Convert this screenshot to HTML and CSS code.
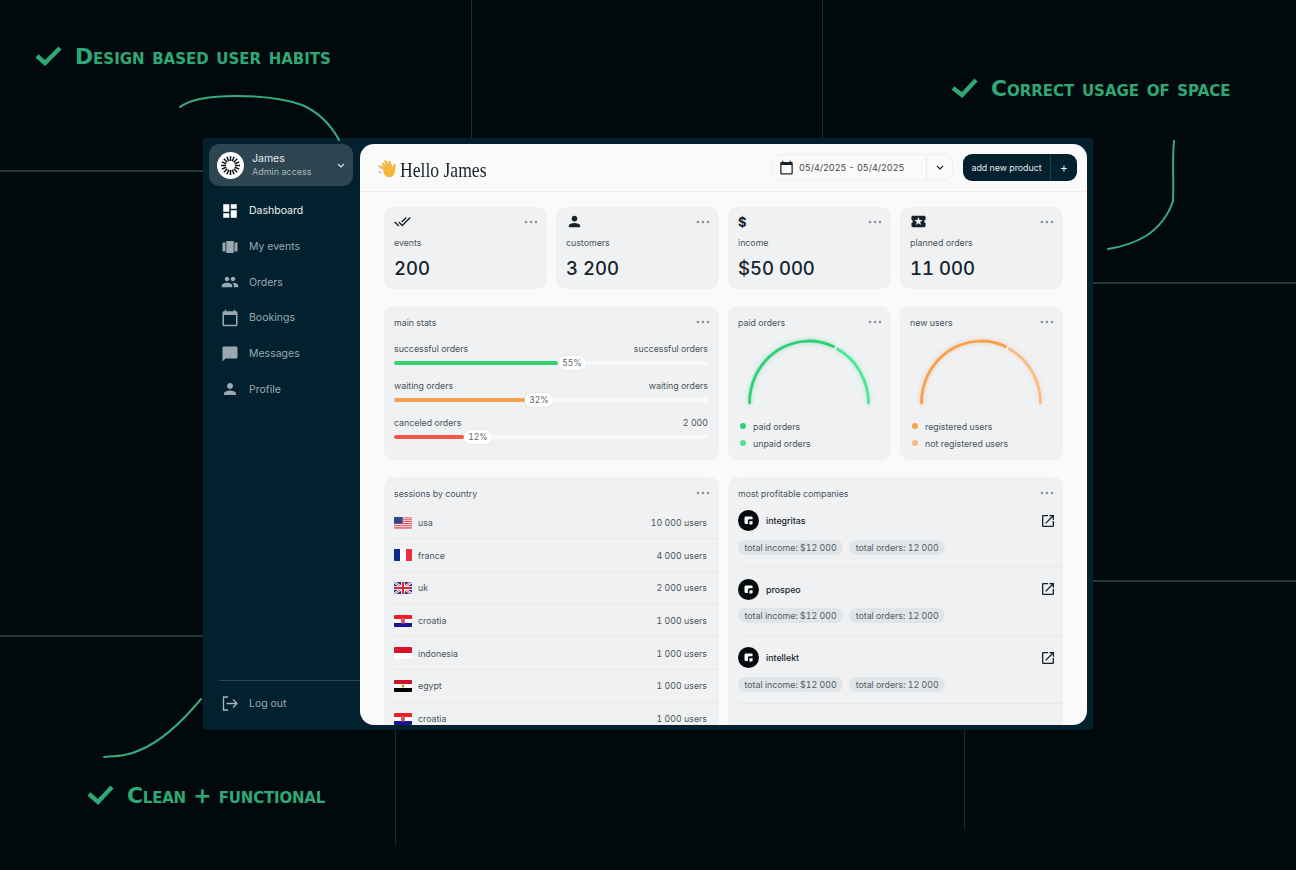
FILE: index.html
```html
<!DOCTYPE html>
<html lang="en">
<head>
    <meta charset="UTF-8">
    <meta name="viewport" content="width=device-width, initial-scale=1.0">
    <title>Dashboard</title>
    <link rel="stylesheet" href="styles.css">
</head>
<body>

    <svg class="defs" width="0" height="0">
        <symbol id="i-dots" viewBox="0 0 14 4"><circle cx="2" cy="2" r="1.3"/><circle cx="7" cy="2" r="1.3"/><circle cx="12" cy="2" r="1.3"/></symbol>
        <symbol id="i-open" viewBox="0 0 24 24"><path d="M19 19H5V5h7V3H5c-1.11 0-2 .9-2 2v14c0 1.1.89 2 2 2h14c1.1 0 2-.9 2-2v-7h-2v7zM14 3v2h3.59l-9.83 9.83 1.41 1.41L19 6.41V10h2V3h-7z"/></symbol>
        <symbol id="i-logo" viewBox="0 0 21 21"><circle cx="10.5" cy="10.5" r="10.5" fill="#05090c"/><path d="M6.5 8c0-.9.6-1.5 1.5-1.5h5.2c.9 0 1.4.5 1.4 1.3v1.4h-3.2c-.9 0-1.5.6-1.5 1.5v3.2H8c-.9 0-1.5-.6-1.5-1.5zM11.4 11.2h3.2v2.2c0 .7-.5 1.2-1.2 1.2h-2v-3.4z" fill="#fff"/></symbol>
        <symbol id="i-cal" viewBox="0 0 24 24"><path d="M20 3h-1V1h-2v2H7V1H5v2H4c-1.1 0-2 .9-2 2v16c0 1.1.9 2 2 2h16c1.1 0 2-.9 2-2V5c0-1.1-.9-2-2-2zm0 18H4V8h16v13z"/></symbol>
    </svg>

    <!-- background grid -->
    <div class="gline h" style="top:170px;left:0;width:203px"></div>
    <div class="gline h" style="top:635px;left:0;width:203px"></div>
    <div class="gline h" style="top:282px;left:1093px;width:203px"></div>
    <div class="gline h" style="top:580px;left:1093px;width:203px"></div>
    <div class="gline v" style="left:471px;top:0;height:138px"></div>
    <div class="gline v" style="left:822px;top:0;height:138px"></div>
    <div class="gline v" style="left:395px;top:730px;height:115px"></div>
    <div class="gline v" style="left:964px;top:730px;height:100px"></div>

    <!-- notes -->
    <svg class="scribbles" width="1296" height="870" viewBox="0 0 1296 870">
        <g class="scribble">
            <path d="M180 107C192 98 215 96 236 96C262 96 286 99 302 105C318 112 331 125 339 140"/>
            <path d="M1174 141C1172 160 1174 180 1173 201C1168 216 1158 228 1146 236C1134 243 1122 247 1108 249"/>
            <path d="M104 757C116 756 128 756 140 750C162 741 182 722 201 699"/>
        </g>
        <g class="tick">
            <path d="M37 56L45 63L60 48"/>
            <path d="M953 88L962 95L976 80"/>
            <path d="M89 794L98 802L112 787"/>
        </g>
    </svg>
    <div class="note note-a">Design based user habits</div>
    <div class="note note-b">Correct usage of space</div>
    <div class="note note-c">Clean + functional</div>

    <div class="app">
        <aside class="sidebar">
            <div class="user">
                <svg class="avatar" width="27" height="27" viewBox="0 0 27 27">
                    <circle cx="13.5" cy="13.5" r="13.5" fill="#fff"/>
                    <g class="rays">
                        <path d="M13.5 4v5M13.5 18v5M4 13.5h5M18 13.5h5M6.8 6.8l3.5 3.5M16.7 16.7l3.5 3.5M6.8 20.2l3.5-3.5M16.7 10.3l3.5-3.5M9.9 4.8l1.9 4.5M15.2 17.7l1.9 4.5M4.8 17.1l4.5-1.9M17.7 11.8l4.5-1.9M4.8 9.9l4.5 1.9M17.7 15.2l4.5 1.9M17.1 4.8l-1.9 4.5M11.8 17.7l-1.9 4.5"/>
                    </g>
                </svg>
                <div class="user-text">
                    <div class="user-name">James</div>
                    <div class="user-role">Admin access</div>
                </div>
                <svg class="chev" width="8" height="5" viewBox="0 0 8 5"><path d="M1 1l3 3 3-3"/></svg>
            </div>

            <nav class="nav">
                <a class="nav-item active">
                    <svg viewBox="0 0 24 24"><path d="M3 13h8V3H3v10zm0 8h8v-6H3v6zm10 0h8V11h-8v10zm0-18v6h8V3h-8z"/></svg>
                    Dashboard
                </a>
                <a class="nav-item">
                    <svg viewBox="0 0 24 24"><path d="M7 20h10V4H7v16zm-5-2h4V6H2v12zM18 6v12h4V6h-4z"/></svg>
                    My events
                </a>
                <a class="nav-item">
                    <svg viewBox="0 0 24 24"><path d="M16 11c1.66 0 2.99-1.34 2.99-3S17.66 5 16 5c-1.66 0-3 1.34-3 3s1.34 3 3 3zm-8 0c1.66 0 2.99-1.34 2.99-3S9.66 5 8 5C6.34 5 5 6.34 5 8s1.34 3 3 3zm0 2c-2.33 0-7 1.17-7 3.5V19h14v-2.5c0-2.33-4.67-3.5-7-3.5zm8 0c-.29 0-.62.02-.97.05 1.16.84 1.97 1.97 1.97 3.45V19h6v-2.5c0-2.33-4.67-3.5-7-3.5z"/></svg>
                    Orders
                </a>
                <a class="nav-item">
                    <svg viewBox="0 0 24 24"><use href="#i-cal"/></svg>
                    Bookings
                </a>
                <a class="nav-item">
                    <svg viewBox="0 0 24 24"><path d="M20 2H4c-1.1 0-2 .9-2 2v18l4-4h14c1.1 0 2-.9 2-2V4c0-1.1-.9-2-2-2z"/></svg>
                    Messages
                </a>
                <a class="nav-item">
                    <svg viewBox="0 0 24 24"><path d="M12 12c2.21 0 4-1.79 4-4s-1.79-4-4-4-4 1.79-4 4 1.79 4 4 4zm0 2c-2.67 0-8 1.34-8 4v2h16v-2c0-2.66-5.33-4-8-4z"/></svg>
                    Profile
                </a>
            </nav>

            <div class="logout">
                <svg class="logout-icon" width="16" height="15" viewBox="0 0 16 15"><path d="M6 1H1.5v13H6M4.5 7.5H15M11 3.5l4 4-4 4"/></svg>
                Log out
            </div>
        </aside>

        <main class="main">
            <header class="topbar">
                <div class="hello">
                    <svg class="wave" width="21" height="20" viewBox="0 0 21 20">
                        <path d="M3 10L1 8M3 15L1.2 14" stroke="#b7b7b7" stroke-width="1.4" fill="none" stroke-linecap="round"/>
                        <path transform="rotate(-18 10 10)" d="M5 10.5L3.2 7.4c-.8-1.3 1-2.4 1.9-1.2L6.6 8.6 5.4 4.8c-.4-1.5 1.6-2.1 2.2-.7l1.6 4-.8-5c-.2-1.5 1.9-1.8 2.3-.3l1.2 5 .1-3.3c.1-1.5 2.1-1.4 2.2.1l.6 6.2 1.7-2.3c.9-1.1 2.4 0 1.7 1.2l-2.3 4.8c-1.2 3.2-3.8 5.4-7 4.7-2.6-.6-3.8-2.9-4.8-5.2z" fill="#f5b43a"/>
                    </svg>
                    <h1>Hello James</h1>
                </div>
                <div class="top-actions">
                    <div class="datebox">
                        <div class="date-range">
                            <svg width="15" height="15" viewBox="0 0 24 24"><use href="#i-cal"/></svg>
                            05/4/2025 - 05/4/2025
                        </div>
                        <div class="date-drop">
                            <svg class="chev" width="8" height="5" viewBox="0 0 8 5"><path d="M1 1l3 3 3-3"/></svg>
                        </div>
                    </div>
                    <div class="add-btn">
                        <span class="add-label">add new product</span>
                        <span class="add-plus">+</span>
                    </div>
                </div>
            </header>

            <div class="content">
                <div class="card stat">
                    <div class="stat-head">
                        <svg class="stat-icon" viewBox="0 0 24 24"><path d="M18 7l-1.41-1.41-6.34 6.34 1.41 1.41L18 7zm4.24-1.41L11.66 16.17 7.48 12l-1.41 1.41L11.66 19l12-12-1.42-1.41zM.41 13.41L6 19l1.41-1.41L1.83 12 .41 13.41z"/></svg>
                        <svg class="dots" width="14" height="4"><use href="#i-dots"/></svg>
                    </div>
                    <div class="stat-label">events</div>
                    <div class="stat-value">200</div>
                </div>
                <div class="card stat">
                    <div class="stat-head">
                        <svg class="stat-icon" viewBox="0 0 24 24"><path d="M12 12c2.21 0 4-1.79 4-4s-1.79-4-4-4-4 1.79-4 4 1.79 4 4 4zm0 2c-2.67 0-8 1.34-8 4v2h16v-2c0-2.66-5.33-4-8-4z"/></svg>
                        <svg class="dots" width="14" height="4"><use href="#i-dots"/></svg>
                    </div>
                    <div class="stat-label">customers</div>
                    <div class="stat-value">3 200</div>
                </div>
                <div class="card stat">
                    <div class="stat-head">
                        <span class="dollar">$</span>
                        <svg class="dots" width="14" height="4"><use href="#i-dots"/></svg>
                    </div>
                    <div class="stat-label">income</div>
                    <div class="stat-value">$50 000</div>
                </div>
                <div class="card stat">
                    <div class="stat-head">
                        <svg class="stat-icon" viewBox="0 0 24 24"><path d="M20 12c0-1.1.9-2 2-2V6c0-1.1-.9-2-2-2H4c-1.1 0-1.99.9-1.99 2v4c1.1 0 1.99.9 1.99 2s-.89 2-2 2v4c0 1.1.9 2 2 2h16c1.1 0 2-.9 2-2v-4c-1.1 0-2-.9-2-2zm-4.42 4.8L12 14.5l-3.58 2.3 1.08-4.12-3.29-2.69 4.24-.25L12 5.8l1.54 3.95 4.24.25-3.29 2.69 1.09 4.11z"/></svg>
                        <svg class="dots" width="14" height="4"><use href="#i-dots"/></svg>
                    </div>
                    <div class="stat-label">planned orders</div>
                    <div class="stat-value">11 000</div>
                </div>

                <div class="card stats-card wide">
                    <div class="card-head"><span>main stats</span><svg class="dots" width="14" height="4"><use href="#i-dots"/></svg></div>
                    <div class="bar-row">
                        <div class="bar-labels"><span>successful orders</span><span>successful orders</span></div>
                        <div class="bar"><div class="bar-fill green" style="width:164px"><span class="pill">55%</span></div></div>
                    </div>
                    <div class="bar-row">
                        <div class="bar-labels"><span>waiting orders</span><span>waiting orders</span></div>
                        <div class="bar"><div class="bar-fill orange" style="width:131px"><span class="pill">32%</span></div></div>
                    </div>
                    <div class="bar-row">
                        <div class="bar-labels"><span>canceled orders</span><span>2 000</span></div>
                        <div class="bar"><div class="bar-fill red" style="width:70px"><span class="pill">12%</span></div></div>
                    </div>
                </div>

                <div class="card gauge-card">
                    <div class="card-head"><span>paid orders</span><svg class="dots" width="14" height="4"><use href="#i-dots"/></svg></div>
                    <svg class="gauge gauge-green" width="130" height="76" viewBox="0 0 130 76">
                        <path class="arc-main" d="M5.5 68A59.5 62 0 0 1 89.5 11.5"/>
                        <path class="arc-soft" d="M93.5 14A59.5 62 0 0 1 124.5 68"/>
                    </svg>
                    <div class="legend"><i class="dot" style="background:#2fcf78"></i>paid orders</div>
                    <div class="legend"><i class="dot" style="background:#4fe597"></i>unpaid orders</div>
                </div>

                <div class="card gauge-card">
                    <div class="card-head"><span>new users</span><svg class="dots" width="14" height="4"><use href="#i-dots"/></svg></div>
                    <svg class="gauge gauge-orange" width="130" height="76" viewBox="0 0 130 76">
                        <path class="arc-main" d="M5.5 68A59.5 62 0 0 1 89.5 11.5"/>
                        <path class="arc-soft" d="M93.5 14A59.5 62 0 0 1 124.5 68"/>
                    </svg>
                    <div class="legend"><i class="dot" style="background:#f7a04d"></i>registered users</div>
                    <div class="legend"><i class="dot" style="background:#f9bb83"></i>not registered users</div>
                </div>

                <div class="card list-card wide">
                    <div class="card-head"><span>sessions by country</span><svg class="dots" width="14" height="4"><use href="#i-dots"/></svg></div>
                    <div class="countries">
                        <div class="country">
                            <svg class="flag" viewBox="0 0 18 12">
                                <rect width="18" height="12" fill="#fff"/>
                                <path d="M0 .9h18M0 2.8h18M0 4.6h18M0 6.5h18M0 8.3h18M0 10.2h18M0 11.9h18" stroke="#d8374a" stroke-width=".95"/>
                                <rect width="8.5" height="6.4" fill="#2a4a8c"/>
                            </svg>
                            <span class="country-name">usa</span><span class="country-users">10 000 users</span>
                        </div>
                        <div class="country">
                            <svg class="flag" viewBox="0 0 18 12"><rect width="6" height="12" fill="#0b2a8e"/><rect x="6" width="6" height="12" fill="#fff"/><rect x="12" width="6" height="12" fill="#ee2f42"/></svg>
                            <span class="country-name">france</span><span class="country-users">4 000 users</span>
                        </div>
                        <div class="country">
                            <svg class="flag" viewBox="0 0 18 12">
                                <rect width="18" height="12" fill="#233a80"/>
                                <path d="M0 0L18 12M18 0L0 12" stroke="#fff" stroke-width="2.4"/>
                                <path d="M0 0L18 12M18 0L0 12" stroke="#d8283c" stroke-width=".8"/>
                                <path d="M9 0V12M0 6H18" stroke="#fff" stroke-width="3.6"/>
                                <path d="M9 0V12M0 6H18" stroke="#d8283c" stroke-width="2"/>
                            </svg>
                            <span class="country-name">uk</span><span class="country-users">2 000 users</span>
                        </div>
                        <div class="country">
                            <svg class="flag" viewBox="0 0 18 12"><rect width="18" height="4" fill="#ee1c25"/><rect y="4" width="18" height="4" fill="#fff"/><rect y="8" width="18" height="4" fill="#171796"/><rect x="7" y="3" width="4" height="5.5" rx="1" fill="#d8596a"/></svg>
                            <span class="country-name">croatia</span><span class="country-users">1 000 users</span>
                        </div>
                        <div class="country">
                            <svg class="flag" viewBox="0 0 18 12"><rect width="18" height="6" fill="#d8132a"/><rect y="6" width="18" height="6" fill="#fff"/></svg>
                            <span class="country-name">indonesia</span><span class="country-users">1 000 users</span>
                        </div>
                        <div class="country">
                            <svg class="flag" viewBox="0 0 18 12"><rect width="18" height="4" fill="#ce1126"/><rect y="4" width="18" height="4" fill="#fff"/><rect y="8" width="18" height="4" fill="#000"/><rect x="8" y="4.6" width="2" height="2.8" fill="#c09300"/></svg>
                            <span class="country-name">egypt</span><span class="country-users">1 000 users</span>
                        </div>
                        <div class="country">
                            <svg class="flag" viewBox="0 0 18 12"><rect width="18" height="4" fill="#ee1c25"/><rect y="4" width="18" height="4" fill="#fff"/><rect y="8" width="18" height="4" fill="#171796"/><rect x="7" y="3" width="4" height="5.5" rx="1" fill="#d8596a"/></svg>
                            <span class="country-name">croatia</span><span class="country-users">1 000 users</span>
                        </div>
                    </div>
                </div>

                <div class="card list-card wide">
                    <div class="card-head"><span>most profitable companies</span><svg class="dots" width="14" height="4"><use href="#i-dots"/></svg></div>
                    <div class="company">
                        <div class="company-top">
                            <svg width="21" height="21"><use href="#i-logo"/></svg>
                            <span class="company-name">integritas</span>
                            <svg class="open" width="16" height="16"><use href="#i-open"/></svg>
                        </div>
                        <div class="chips"><span class="chip">total income: $12 000</span><span class="chip">total orders: 12 000</span></div>
                    </div>
                    <div class="company">
                        <div class="company-top">
                            <svg width="21" height="21"><use href="#i-logo"/></svg>
                            <span class="company-name">prospeo</span>
                            <svg class="open" width="16" height="16"><use href="#i-open"/></svg>
                        </div>
                        <div class="chips"><span class="chip">total income: $12 000</span><span class="chip">total orders: 12 000</span></div>
                    </div>
                    <div class="company">
                        <div class="company-top">
                            <svg width="21" height="21"><use href="#i-logo"/></svg>
                            <span class="company-name">intellekt</span>
                            <svg class="open" width="16" height="16"><use href="#i-open"/></svg>
                        </div>
                        <div class="chips"><span class="chip">total income: $12 000</span><span class="chip">total orders: 12 000</span></div>
                    </div>
                </div>
            </div>
        </main>
    </div>

</body>
</html>
```

FILE: styles.css
```css
* {
    box-sizing: border-box;
}
html, body {
    margin: 0;
    height: 870px;
    overflow: hidden;
}
body {
    position: relative;
    background-color: #02090c;
    font-family: Inter, "Liberation Sans", sans-serif;
    color: #4a545a;
    padding: 138px 0 0 203px;
    font-variant-numeric: tabular-nums;
}
.defs {
    position: absolute;
}
.gline {
    position: absolute;
}
.gline.h {
    height: 2px;
    background-color: #1f3a34;
}
.gline.v {
    width: 1px;
    background-color: #15302a;
}
.scribbles {
    position: absolute;
    left: 0;
    top: 0;
    z-index: 2;
    pointer-events: none;
}
.scribble path {
    fill: none;
    stroke: #38aa7c;
    stroke-width: 2;
    stroke-linecap: round;
}
.tick path {
    fill: none;
    stroke: #2fa878;
    stroke-width: 4.4;
}
.note {
    position: absolute;
    color: #2fa878;
    font-family: "DejaVu Sans", sans-serif;
    font-weight: 700;
    font-variant: small-caps;
    font-size: 21.8px;
    line-height: 24px;
    white-space: nowrap;
}
.note-a { left: 75px; top: 45px; }
.note-b { left: 991px; top: 77px; }
.note-c { left: 127px; top: 784px; letter-spacing: -0.2px; }

.app {
    width: 890px;
    height: 592px;
    background-color: #03202f;
    border-radius: 4px;
    padding: 6px 6px 5px 6px;
    display: flex;
}
.sidebar {
    width: 151px;
    display: flex;
    flex-direction: column;
}
.user {
    width: 144px;
    height: 42px;
    background-color: #2e4552;
    border-radius: 10px;
    padding: 0 8px;
    display: flex;
    align-items: center;
    gap: 8px;
}
.user-text {
    flex: 1;
}
.user-name {
    color: #e6ebee;
    font-size: 10.5px;
    line-height: 14px;
}
.user-role {
    color: #a9b6bd;
    font-size: 9px;
    line-height: 12px;
}
.rays {
    fill: none;
    stroke: #0b1114;
    stroke-width: 1.5;
}
.chev path {
    fill: none;
    stroke: currentColor;
    stroke-width: 1.1;
}
.user .chev {
    color: #dfe5e8;
}
.nav {
    margin-top: 7px;
    padding-left: 11.5px;
}
.nav-item {
    height: 35.7px;
    display: flex;
    align-items: center;
    gap: 10.5px;
    color: #9aa9b1;
    font-size: 10.5px;
}
.nav-item svg {
    width: 18px;
    height: 18px;
    fill: #9aa9b1;
}
.nav-item.active {
    color: #eef2f4;
}
.nav-item.active svg {
    fill: #fff;
}
.logout {
    margin-top: auto;
    margin-left: 10px;
    height: 45px;
    border-top: 1px solid #2b4452;
    display: flex;
    align-items: center;
    gap: 11px;
    color: #9aa9b1;
    font-size: 10.5px;
    padding: 0 0 0 3px;
}
.logout-icon path {
    fill: none;
    stroke: #a9b6bd;
    stroke-width: 1.3;
}

.main {
    flex: 1;
    background-color: #fafafa;
    border-radius: 14px;
    overflow: hidden;
}
.topbar {
    height: 48px;
    border-bottom: 1px solid #eceeef;
    padding: 0 10px 0 18px;
    display: flex;
    align-items: center;
    justify-content: space-between;
}
.hello {
    display: flex;
    align-items: center;
    gap: 1px;
    margin-top: 4px;
}
.hello h1 {
    margin: 0;
    font-family: "Liberation Serif", serif;
    font-weight: 400;
    font-size: 22px;
    line-height: 24px;
    color: #16232b;
    transform: scaleX(0.8);
    transform-origin: left center;
}
.wave {
    margin-top: -3px;
}
.top-actions {
    display: flex;
    gap: 10px;
}
.datebox {
    height: 27px;
    width: 182px;
    border: 1px solid #eeeff0;
    border-radius: 10px;
    display: flex;
    align-items: center;
    color: #3c474e;
    font-size: 9px;
}
.date-range {
    flex: 1;
    display: flex;
    align-items: center;
    gap: 5px;
    padding-left: 7px;
    height: 100%;
    border-right: 1px solid #e7e9ea;
}
.date-range svg {
    fill: #16232b;
}
.date-drop {
    width: 25px;
    display: flex;
    justify-content: center;
    color: #16232b;
}
.add-btn {
    height: 27px;
    width: 114px;
    background-color: #03202f;
    color: #e9edef;
    border-radius: 9px;
    display: flex;
    align-items: center;
    font-size: 8.8px;
}
.add-label {
    width: 88px;
    text-align: center;
    line-height: 27px;
    border-right: 1px solid #24404e;
}
.add-plus {
    flex: 1;
    text-align: center;
    font-size: 12px;
}

.content {
    padding: 15px 24px 0;
    display: grid;
    grid-template-columns: repeat(4, 163px);
    grid-template-rows: 81.5px 153.5px 260px;
    column-gap: 9px;
    row-gap: 17.5px;
}
.card {
    background-color: #eff1f3;
    border-radius: 10px;
    padding: 0 9px 10px 10px;
    overflow: hidden;
}
.wide {
    grid-column: span 2;
}
.dots {
    fill: #8d9397;
}
.stat {
    padding-top: 7px;
}
.stat-head {
    height: 15px;
    display: flex;
    align-items: center;
    justify-content: space-between;
}
.stat-icon {
    width: 17px;
    height: 17px;
    fill: #16232b;
}
.dollar {
    font-size: 13px;
    font-weight: 700;
    color: #16232b;
}
.stat-label {
    margin-top: 6.5px;
    font-size: 8.8px;
    line-height: 14px;
}
.stat-value {
    margin-top: 6px;
    font-size: 18.5px;
    line-height: 24px;
    font-weight: 500;
    color: #16232b;
}
.card-head {
    height: 32px;
    display: flex;
    align-items: center;
    justify-content: space-between;
    font-size: 8.8px;
}

.bar-row {
    margin-top: 3.5px;
    height: 37px;
}
.bar-row + .bar-row {
    margin-top: 0;
}
.bar-labels {
    display: flex;
    justify-content: space-between;
    font-size: 8.8px;
    line-height: 14px;
    margin-right: 2px;
}
.bar {
    margin-top: 5px;
    height: 4px;
    background-color: #f8f9fa;
    border-radius: 2px;
    margin-right: 2px;
}
.bar-fill {
    position: relative;
    height: 4px;
    border-radius: 2px;
}
.bar-fill.green { background-color: #2fd173; }
.bar-fill.orange { background-color: #f7a04d; }
.bar-fill.red { background-color: #f4564e; }
.pill {
    position: absolute;
    left: 100%;
    top: -5px;
    height: 14px;
    width: 28px;
    background-color: #fff;
    border-radius: 7px;
    font-size: 8.5px;
    line-height: 14px;
    text-align: center;
    color: #5d666c;
    box-shadow: 0 0 3px rgba(0, 0, 0, 0.08);
}

.gauge {
    display: block;
    margin: -3.5px 0 7px 6px;
}
.gauge path {
    fill: none;
    stroke-width: 2.8;
    stroke-linecap: round;
}
.gauge-green .arc-main { stroke: #2fcf78; filter: drop-shadow(0 0 2px rgba(47, 207, 120, 0.5)); }
.gauge-green .arc-soft { stroke: #4fe597; filter: drop-shadow(0 0 2px rgba(79, 229, 151, 0.5)); }
.gauge-orange .arc-main { stroke: #f7a04d; filter: drop-shadow(0 0 2px rgba(247, 160, 77, 0.5)); }
.gauge-orange .arc-soft { stroke: #f9bb83; filter: drop-shadow(0 0 2px rgba(249, 187, 131, 0.5)); }
.legend {
    display: flex;
    align-items: center;
    gap: 7px;
    height: 17px;
    font-size: 8.8px;
    padding-left: 2px;
}
.dot {
    width: 6px;
    height: 6px;
    border-radius: 50%;
}

.list-card {
    padding-right: 0;
}
.list-card .card-head {
    padding-right: 9px;
}
.countries {
    margin-top: -2.3px;
}
.country {
    height: 32.7px;
    display: flex;
    align-items: center;
    border-bottom: 1px solid #e5e8ea;
    font-size: 8.8px;
    padding-right: 12px;
}
.flag {
    width: 18px;
    height: 12px;
    border-radius: 1px;
    margin-right: 6px;
}
.country-name {
    flex: 1;
}
.company {
    height: 58px;
    margin-bottom: 10.5px;
    border-bottom: 1px solid #e7eaec;
    padding-top: 1px;
}
.company-top {
    height: 21px;
    display: flex;
    align-items: center;
    gap: 7px;
    padding-right: 7px;
}
.company-name {
    flex: 1;
    font-size: 8.8px;
    font-weight: 500;
    color: #16232b;
}
.open {
    fill: #16232b;
}
.chips {
    margin-top: 8.5px;
    display: flex;
    gap: 6px;
}
.chip {
    height: 15px;
    line-height: 15px;
    padding: 0 6.5px;
    border-radius: 8px;
    background-color: #e1e5e8;
    font-size: 8.8px;
    color: #525c63;
}
```
